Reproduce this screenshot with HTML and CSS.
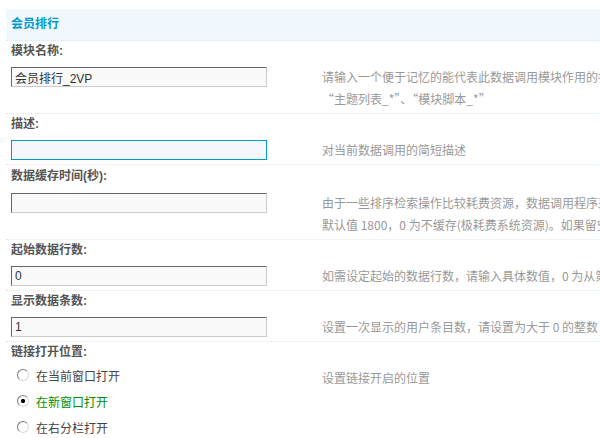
FILE: index.html
```html
<!DOCTYPE html>
<html lang="zh-CN">
<head>
<meta charset="utf-8">
<title>会员排行</title>
<link rel="stylesheet" href="styles.css">
</head>
<body>
<div class="panel">
  <h3 class="panel-title">会员排行</h3>

  <div class="item">
    <div class="item-label">模块名称:</div>
    <div class="item-body">
      <div class="item-field"><input class="txt" type="text" value="会员排行_2VP"></div>
      <div class="item-tip">请输入一个便于记忆的能代表此数据调用模块作用的名称，请勿使用系统保留的名称，如<br>“主题列表_*”、“模块脚本_*”</div>
    </div>
  </div>

  <div class="item">
    <div class="item-label">描述:</div>
    <div class="item-body">
      <div class="item-field"><input class="txt txt-focus" type="text" value=""></div>
      <div class="item-tip">对当前数据调用的简短描述</div>
    </div>
  </div>

  <div class="item item-tall">
    <div class="item-label">数据缓存时间(秒):</div>
    <div class="item-body">
      <div class="item-field"><input class="txt" type="text" value=""></div>
      <div class="item-tip">由于一些排序检索操作比较耗费资源，数据调用程序采用缓存技术来提高效率，本设定为缓存自动更新的时间，<br>默认值 1800，0 为不缓存(极耗费系统资源)。如果留空则使用系统默认设置</div>
    </div>
  </div>

  <div class="item">
    <div class="item-label">起始数据行数:</div>
    <div class="item-body">
      <div class="item-field"><input class="txt" type="text" value="0"></div>
      <div class="item-tip">如需设定起始的数据行数，请输入具体数值，0 为从第一行开始，以此类推</div>
    </div>
  </div>

  <div class="item">
    <div class="item-label">显示数据条数:</div>
    <div class="item-body">
      <div class="item-field"><input class="txt" type="text" value="1"></div>
      <div class="item-tip">设置一次显示的用户条目数，请设置为大于 0 的整数</div>
    </div>
  </div>

  <div class="item item-last">
    <div class="item-label">链接打开位置:</div>
    <div class="item-body">
      <ul class="radio-list">
        <li><input class="radio" type="radio" name="target" id="t-self"><label for="t-self">在当前窗口打开</label></li>
        <li class="checked"><input class="radio" type="radio" name="target" id="t-blank" checked><label for="t-blank">在新窗口打开</label></li>
        <li><input class="radio" type="radio" name="target" id="t-right"><label for="t-right">在右分栏打开</label></li>
      </ul>
      <div class="item-tip">设置链接开启的位置</div>
    </div>
  </div>
</div>
</body>
</html>
```

FILE: styles.css
```css
html, body {
  margin: 0;
  overflow: hidden;
  background: #fff;
}

body {
  font: 12px "Liberation Sans", "Noto Sans CJK SC", sans-serif;
  color: #333;
}

.panel {
  margin: 9px 0 0 6px;
  width: 1000px;
}

.panel-title {
  margin: 0;
  height: 31px;
  line-height: 31px;
  padding-left: 5px;
  background: #f0f7fd;
  color: #0099cc;
  font-size: 12px;
  font-weight: bold;
  border-bottom: 1px dotted #d6e9f8;
}

.item {
  border-bottom: 1px dotted #d6e9f8;
}

.item-last {
  border-bottom: 0;
}

.item-label {
  line-height: 21px;
  padding-left: 5px;
  font-weight: bold;
  color: #555;
}

.item-tall .item-label {
  line-height: 23px;
}

.item-body {
  display: grid;
  grid-template-columns: 316px 1fr;
  align-items: start;
  padding: 5px 0 3px;
}

.item-field {
  padding-left: 5px;
}

.txt {
  display: block;
  box-sizing: border-box;
  width: 256px;
  height: 20px;
  margin: 0;
  padding: 0 3px;
  border: 1px solid;
  border-color: #666 #ccc #ccc #666;
  background: #f9f9f9;
  font: 12px "Liberation Sans", "Noto Sans CJK SC", sans-serif;
  color: #333;
  outline: none;
}

.txt-focus {
  border-color: #0099cc;
  background: #f4f8fd;
}

.item-tip {
  margin-top: -1px;
  line-height: 22px;
  font-family: "Noto Sans CJK SC", sans-serif;
  color: #999;
  white-space: nowrap;
}

.radio-list {
  list-style: none;
  margin: -6px 0 0;
  padding: 0 0 0 11px;
}

.radio-list li {
  display: flex;
  align-items: center;
  gap: 7px;
  height: 26px;
  color: #444;
}

.radio-list li.checked {
  color: #009000;
}

.radio {
  appearance: none;
  -webkit-appearance: none;
  box-sizing: border-box;
  width: 12px;
  height: 12px;
  margin: 0;
  border-radius: 50%;
  border: 1px solid;
  border-color: #7a7a7a #d8d8d8 #d8d8d8 #7a7a7a;
  background: #fff;
}

.radio:checked {
  background: radial-gradient(circle, #000 0 1.8px, #fff 2.4px);
}
```
